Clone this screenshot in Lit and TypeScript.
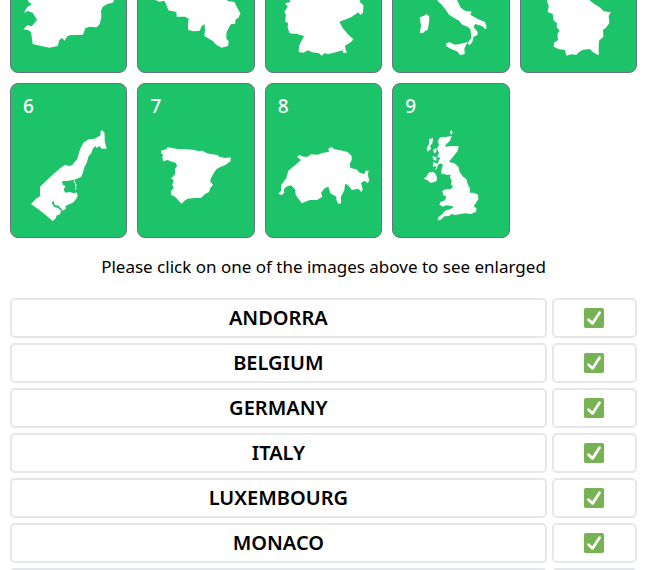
import { LitElement, html, css, svg } from "lit";
import { customElement, state } from "lit/decorators.js";

interface Country {
  name: string;
  viewBox: string;
  outline: string;
}

const countries: Country[] = [
  {
    name: "Andorra",
    viewBox: "33 -243 346 459",
    outline:
      "M88-90 L130-120 L200-140 L270-120 L330-80 L350-40 L345-4 L338 8 L322 12 L308 20 L303 32 L304 52 L299 72 L290 82 L270 80 L256 84 L251 100 L248 104 L214 105 L202 108 L194 122 L186 114 L178 120 L173 138 L148 143 L124 138 L98 132 L93 96 L84 90 L70 88 L82 76 L95 79 L111 60 L98 38 L84 33 L72 38 L81 22 L95 13 L83 4 L90-6Z",
  },
  {
    name: "Belgium",
    viewBox: "415 -243 346 459",
    outline:
      "M440-60 L520-90 L620-95 L680-60 L690-20 L682 2 L704 6 L713 24 L722 40 L716 54 L708 58 L706 72 L694 72 L687 84 L680 98 L680 116 L687 124 L685 138 L665 143 L650 134 L638 122 L614 108 L616 90 L614 72 L606 78 L600 92 L582 94 L565 90 L565 72 L567 56 L556 50 L531 50 L530 36 L506 31 L500 14 L494 2 L478 5 L467 0Z",
  },
  {
    name: "Germany",
    viewBox: "23 -243 346 459",
    outline:
      "M86-40 L100-100 L160-150 L260-140 L310-80 L305 6 L315 16 L314 38 L306 45 L300 37 L278 52 L243 65 L253 84 L268 102 L285 118 L278 126 L260 137 L262 150 L266 157 L256 160 L252 151 L232 157 L210 162 L198 160 L190 167 L182 160 L162 157 L148 151 L136 158 L121 157 L122 137 L137 108 L116 102 L94 100 L88 84 L89 70 L80 64 L83 46 L78 36 L88 20 L80 10 L96 6Z",
  },
  {
    name: "Italy",
    viewBox: "406 -243 346 459",
    outline:
      "M470-60 L500-110 L570-120 L590-90 L570-50 L590-14 L598 0 L609 23 L622 32 L642 35 L638 44 L662 58 L682 66 L687 84 L682 87 L673 78 L652 72 L648 82 L660 96 L659 105 L648 110 L643 128 L634 136 L630 128 L641 114 L638 88 L630 80 L614 74 L604 62 L590 54 L574 44 L563 28 L550 12 L543 6 L530-12 L505-45Z M486 52 L498 48 L507 42 L515 50 L514 66 L510 90 L502 93 L496 99 L486 98 L490 78Z M565 131 L574 126 L592 134 L610 131 L630 126 L620 145 L621 162 L608 166 L598 154 L580 147 L565 138Z",
  },
  {
    name: "Luxembourg",
    viewBox: "62 -243 346 459",
    outline:
      "M142-30 L150-90 L180-130 L220-100 L240-40 L264-2 L282 12 L298 22 L310 34 L332 37 L325 48 L327 68 L318 82 L308 90 L309 110 L296 122 L295 143 L295 166 L280 158 L268 147 L248 149 L236 156 L228 164 L212 163 L198 167 L194 150 L176 148 L160 140 L161 128 L173 120 L171 102 L178 92 L169 82 L170 70 L159 60 L157 42 L142 36 L145 18 L140 4Z",
  },
  {
    name: "Monaco",
    viewBox: "33 18 346 459",
    outline:
      "M305 156 L313 163 L314 176 L314 190 L320 212 L305 212 L298 204 L290 210 L286 204 L278 212 L274 226 L266 234 L260 254 L252 270 L248 286 L243 297 L226 304 L207 308 L186 310 L188 320 L196 324 L191 336 L196 344 L208 342 L222 346 L230 343 L233 354 L226 366 L218 374 L196 384 L198 392 L188 398 L176 384 L164 380 L160 368 L155 374 L162 386 L174 390 L184 400 L178 410 L170 412 L166 422 L158 429 L126 402 L93 378 L108 362 L120 354 L120 326 L156 292 L184 268 L196 260 L206 264 L216 262 L232 242 L240 214 L250 194 L266 184 L284 182 L294 176 L302 172 L301 162Z M223 304 L227 318 L231 322 L228 324 L229 336 L226 336 L225 318 L221 310Z",
  },
  {
    name: "Spain",
    viewBox: "19 18 346 459",
    outline:
      "M88 218 L104 214 L108 207 L118 210 L140 213 L162 214 L184 215 L200 219 L212 218 L226 226 L242 229 L258 231 L262 236 L280 240 L297 238 L296 250 L282 260 L264 268 L254 274 L246 286 L238 300 L235 310 L244 320 L236 330 L232 342 L220 348 L208 360 L188 360 L168 362 L158 368 L150 377 L142 370 L132 358 L118 350 L118 338 L126 330 L122 320 L126 306 L118 302 L130 288 L130 272 L136 264 L132 254 L120 251 L108 246 L94 250 L92 238 L94 230 L88 226Z",
  },
  {
    name: "Switzerland",
    viewBox: "17 18 346 459",
    outline:
      "M110 236 L118 230 L128 236 L142 236 L152 229 L172 230 L186 225 L206 221 L204 212 L214 207 L222 214 L240 217 L262 222 L274 234 L274 246 L268 258 L270 270 L288 274 L298 284 L312 288 L316 278 L325 278 L322 292 L327 306 L322 316 L312 308 L302 316 L307 334 L303 342 L294 332 L274 336 L262 320 L254 318 L252 336 L242 356 L242 376 L234 378 L228 366 L228 356 L210 346 L204 326 L194 330 L182 344 L186 356 L170 366 L148 366 L124 376 L114 362 L106 350 L104 334 L92 322 L78 326 L70 334 L72 344 L64 351 L54 348 L62 338 L62 322 L78 300 L84 278 L104 262 L122 246Z",
  },
  {
    name: "United Kingdom",
    viewBox: "16 18 346 459",
    outline:
      "M157 178 L174 177 L192 174 L187 188 L176 198 L172 206 L192 204 L213 205 L210 218 L198 234 L188 246 L184 252 L200 256 L212 266 L216 282 L226 296 L236 304 L240 318 L247 332 L246 344 L258 344 L271 350 L272 364 L264 376 L258 384 L267 392 L264 402 L250 408 L234 406 L218 408 L202 411 L192 408 L184 414 L170 415 L158 426 L150 427 L152 418 L164 408 L172 398 L186 394 L198 388 L192 384 L176 382 L166 386 L155 380 L158 372 L170 368 L176 356 L166 350 L164 338 L174 334 L188 334 L196 326 L190 320 L192 308 L186 296 L190 290 L176 290 L160 286 L162 272 L166 260 L158 256 L150 262 L152 250 L158 240 L148 236 L154 226 L148 212 L154 200 L150 190Z M108 302 L118 294 L122 284 L136 281 L144 288 L148 300 L146 310 L130 315 L118 306Z M124 184 L136 180 L134 196 L127 204 L130 212 L120 221 L117 210 L124 198Z M186 162 L191 156 L195 164 L190 170Z M136 216 L146 210 L146 222 L140 226Z M134 234 L146 238 L146 248 L138 246Z M136 252 L152 258 L148 270 L142 278 L146 264 L136 266Z",
  },
];

@customElement("app-root")
export class AppRoot extends LitElement {
  static styles = css`
    :host {
      display: block;
      box-sizing: border-box;
      height: 100vh;
      overflow: hidden;
      background: #fff;
      color: #000;
      font-family: "Noto Sans", "Open Sans", sans-serif;
    }
    /* The list is shown scrolled part of the way down its first row. */
    .page {
      margin: -82px 10px 0;
    }
    .cards {
      display: grid;
      grid-template-columns: repeat(5, 1fr);
      gap: 10px;
    }
    .card {
      display: grid;
      height: 155px;
      padding: 0;
      border: 1px solid #6b7280;
      border-radius: 8px;
      background: #1dc368;
      color: #fff;
      font: inherit;
      font-size: 19px;
      font-weight: 500;
      line-height: 28px;
      cursor: pointer;
      overflow: hidden;
    }
    .number,
    .map {
      grid-area: 1 / 1;
    }
    .number {
      justify-self: start;
      align-self: start;
      padding: 8px 12px;
    }
    .map {
      width: 100%;
      height: 153px;
      fill: #fff;
    }
    .hint {
      margin: 0;
      padding: 15px 0 17px;
      font-size: 17px;
      line-height: 28px;
      text-align: center;
    }
    .answers {
      display: grid;
      gap: 5px;
      margin: 0;
      padding: 0;
      list-style: none;
    }
    .answer {
      display: grid;
      grid-template-columns: repeat(7, 1fr);
      gap: 5px;
    }
    .name,
    .result {
      display: flex;
      align-items: center;
      justify-content: center;
      box-sizing: border-box;
      height: 40px;
      border: 2px solid #e5e7eb;
      border-radius: 5px;
    }
    .name {
      grid-column: span 6;
      font-size: 20px;
      line-height: 28px;
      font-weight: 600;
      text-transform: uppercase;
    }
    .check {
      width: 20px;
      height: 20px;
    }
  `;

  @state() private selected = -1;

  private card(country: Country, index: number) {
    return html`<button
      class="card"
      aria-label="Image ${index + 1}"
      aria-pressed=${this.selected === index}
      @click=${() => (this.selected = index)}
    >
      <svg class="map" viewBox=${country.viewBox} aria-hidden="true">
        ${svg`<path d=${country.outline}></path>`}
      </svg>
      <span class="number">${index + 1}</span>
    </button>`;
  }

  private answer(country: Country) {
    return html`<li class="answer">
      <span class="name">${country.name}</span>
      <span class="result">
        <svg class="check" viewBox="0 0 36 36" role="img" aria-label="Correct">
          <rect width="36" height="36" rx="3" fill="#77b255"></rect>
          <path
            fill="#fff"
            d="M29.28 6.362a2.502 2.502 0 0 0-3.458.736L14.936 23.877l-5.029-4.65a2.5 2.5 0 1 0-3.394 3.671l7.209 6.666c.48.445 1.09.665 1.696.665.673 0 1.534-.282 2.099-1.139.332-.506 12.5-19.27 12.5-19.27a2.5 2.5 0 0 0-.737-3.458z"
          ></path>
        </svg>
      </span>
    </li>`;
  }

  render() {
    return html`<main class="page">
      <div class="cards">${countries.map((c, i) => this.card(c, i))}</div>
      <p class="hint">Please click on one of the images above to see enlarged</p>
      <ul class="answers">
        ${countries.slice(0, 7).map((c) => this.answer(c))}
      </ul>
    </main>`;
  }
}
